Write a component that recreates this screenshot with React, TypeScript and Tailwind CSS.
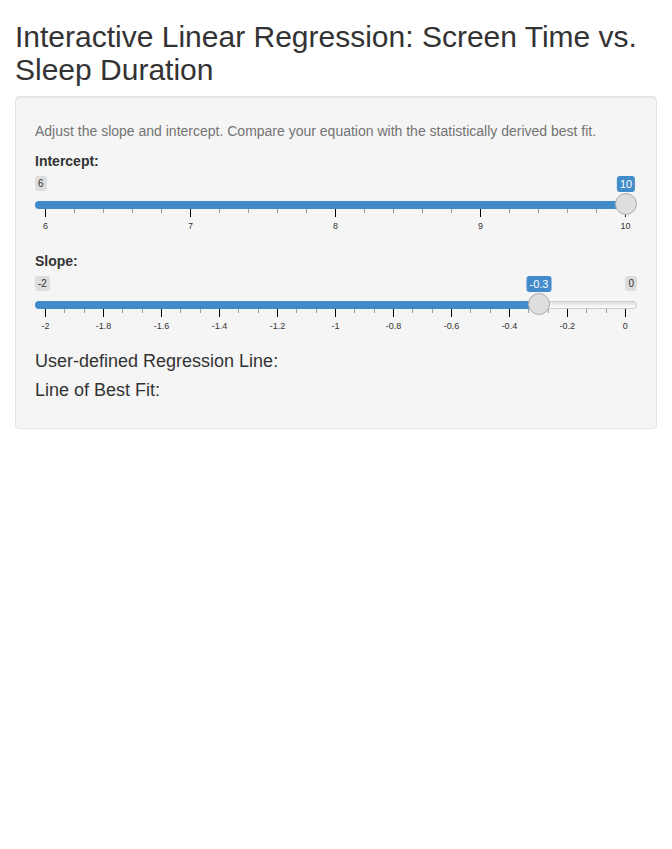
import { useState } from "react";

type Tick = { label?: string };

type RangeSliderProps = {
  id: string;
  label: string;
  min: number;
  max: number;
  step: number;
  initial: number;
  ticks: Tick[];
};

function buildTicks(labels: string[], minorsBetween: number): Tick[] {
  return labels.flatMap((label, i) =>
    i === 0 ? [{ label }] : [...Array.from({ length: minorsBetween }, () => ({})), { label }],
  );
}

const interceptTicks = buildTicks(["6", "7", "8", "9", "10"], 4);
const slopeTicks = buildTicks(
  ["-2", "-1.8", "-1.6", "-1.4", "-1.2", "-1", "-0.8", "-0.6", "-0.4", "-0.2", "0"],
  2,
);

function RangeSlider({ id, label, min, max, step, initial, ticks }: RangeSliderProps) {
  const [value, setValue] = useState(initial);
  const fraction = (value - min) / (max - min);
  // Centre of the 22px handle along the track
  const handleCentre = `calc(${fraction} * (100% - 22px) + 11px)`;

  return (
    <div className="mb-[15px]">
      <label htmlFor={id} className="mb-[5px] block text-sm leading-5 font-bold">
        {label}
      </label>
      <div className="h-[60px]">
        <div className="relative flex h-[17px] items-start justify-between text-[10px] leading-[13px]">
          <span className={`rounded-[3px] bg-[#dddddd] px-[3px] py-px ${fraction < 0.04 ? "invisible" : ""}`}>
            {min}
          </span>
          <span className={`rounded-[3px] bg-[#dddddd] px-[3px] py-px ${fraction > 0.96 ? "invisible" : ""}`}>
            {max}
          </span>
          <output
            htmlFor={id}
            className="absolute top-0 -translate-x-1/2 rounded-[3px] bg-[#428bca] px-[3px] py-px text-[11px] leading-[14px] text-white"
            style={{ left: handleCentre }}
          >
            {value}
          </output>
        </div>
        <div className="relative flex h-[22px] items-end pb-[6px]">
          <div className="h-2 w-full rounded-lg border border-[#cccccc] bg-linear-to-b from-[#dedede] to-white" />
          <div
            className="absolute left-0 h-2 rounded-l-lg bg-[#428bca]"
            style={{ width: handleCentre }}
          />
          <input
            id={id}
            type="range"
            min={min}
            max={max}
            step={step}
            value={value}
            onChange={(e) => setValue(Number(e.target.value))}
            className="absolute inset-0 z-10 m-0 h-[22px] w-full cursor-pointer appearance-none bg-transparent [&::-webkit-slider-thumb]:size-[22px] [&::-webkit-slider-thumb]:appearance-none [&::-webkit-slider-thumb]:rounded-full [&::-webkit-slider-thumb]:border [&::-webkit-slider-thumb]:border-solid [&::-webkit-slider-thumb]:border-[#ababab] [&::-webkit-slider-thumb]:bg-[#dedede] [&::-webkit-slider-thumb]:shadow-[1px_1px_3px_rgba(255,255,255,0.3)]"
          />
        </div>
        <div className="-mt-[6px] mr-[11px] ml-[10px] flex justify-between text-[9px] leading-[12px]" aria-hidden="true">
          {ticks.map((tick, i) =>
            tick.label ? (
              <div key={i} className="flex w-px flex-col items-center gap-[3px]">
                <div className="h-2 w-px bg-black" />
                <span className="whitespace-nowrap">{tick.label}</span>
              </div>
            ) : (
              <div key={i} className="h-1 w-px bg-[#999999]" />
            ),
          )}
        </div>
      </div>
    </div>
  );
}

export default function App() {
  return (
    <main className="px-[15px] pt-5 font-['Liberation_Sans',Arial,sans-serif] text-[#333333]">
      <h2 className="mb-[10px] text-[30px] leading-[33px] font-medium">
        Interactive Linear Regression: Screen Time vs. Sleep Duration
      </h2>
      <form className="rounded-sm border border-[#e3e3e3] bg-[#f5f5f5] p-[19px] shadow-[inset_0_1px_1px_rgba(0,0,0,0.05)]">
        <p className="mt-[5px] mb-[10px] text-sm leading-5 text-[#737373]">
          Adjust the slope and intercept. Compare your equation with the statistically derived best fit.
        </p>
        <RangeSlider
          id="intercept"
          label="Intercept:"
          min={6}
          max={10}
          step={0.1}
          initial={10}
          ticks={interceptTicks}
        />
        <RangeSlider
          id="slope"
          label="Slope:"
          min={-2}
          max={0}
          step={0.05}
          initial={-0.3}
          ticks={slopeTicks}
        />
        <h4 className="mb-[9px] text-lg leading-5 font-medium">User-defined Regression Line:</h4>
        <h4 className="mb-[9px] text-lg leading-5 font-medium">Line of Best Fit:</h4>
      </form>
    </main>
  );
}
